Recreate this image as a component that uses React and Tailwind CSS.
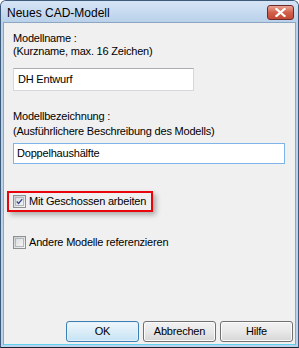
import React from "react";

function CheckBox({ checked }) {
  return (
    <span className="w-[13px] h-[13px] border border-[#8e8f8f] bg-gradient-to-br from-[#cbcfd5] to-[#f6f6f6] flex items-center justify-center shrink-0">
      <span className="w-[9px] h-[9px] border border-[#b3b8bf] bg-gradient-to-br from-[#dcdee2] to-[#f4f4f4] flex items-center justify-center">
        {checked && (
          <svg width="9" height="9" viewBox="0 0 9 9">
            <path d="M1 4.5 L3.3 7 L8 1.5" fill="none" stroke="#3b4e8c" strokeWidth="1.8" />
          </svg>
        )}
      </span>
    </span>
  );
}

function DlgButton({ children, primary }) {
  return (
    <button
      className={
        "w-[73px] h-[21px] rounded-[3px] border text-[11px] leading-none text-black " +
        (primary
          ? "border-[#3c7fb1] bg-gradient-to-b from-[#eef7fc] via-[#dbedf8] to-[#c6e3f4] shadow-[inset_0_0_0_1px_#e4f1fc]"
          : "border-[#707070] bg-gradient-to-b from-[#f2f2f2] via-[#e8e8e8] to-[#d6d6d6] shadow-[inset_0_0_0_1px_#fcfcfc]")
      }
    >
      {children}
    </button>
  );
}

export default function App() {
  return (
    <div className="w-[299px] h-[348px] flex flex-col bg-[#bcd2ea] border border-[#3d5a7a] border-b-[#1a2430] rounded-t-[6px] font-['Liberation_Sans',Arial,sans-serif] text-[11px] tracking-[-0.2px] text-black antialiased overflow-hidden">
      {/* title bar */}
      <div className="h-[21px] shrink-0 flex items-center justify-between pl-[6px] pr-[4px] bg-gradient-to-b from-[#d6e5f5] to-[#b9d1ea]">
        <span className="text-[12px] tracking-normal leading-none pt-[2px]">Neues CAD-Modell</span>
        <span className="w-[27px] h-[15px] mt-[1px] rounded-[3px] border border-[#6e2a2a] bg-gradient-to-b from-[#e8a494] via-[#d2604a] to-[#c34a35] flex items-center justify-center">
          <svg width="11" height="9" viewBox="0 0 11 9">
            <path d="M1.5 1 L9.5 8 M9.5 1 L1.5 8" stroke="#ffffff" strokeWidth="2.2" strokeLinecap="square" />
          </svg>
        </span>
      </div>

      {/* client area */}
      <div className="flex-1 mx-[2px] mb-[2px] bg-[#f0f0f0] border border-[#8da6c2] border-b-[#5fd3ef] flex flex-col pl-[9px] pr-[2px]">
        <div className="pt-[9px] leading-[13px]">
          <div>Modellname :</div>
          <div>(Kurzname, max. 16 Zeichen)</div>
        </div>
        <div className="mt-[10px] w-[181px] h-[23px] bg-white border border-[#d5d9de] border-t-[#abadb3] flex items-center px-[4px]">
          DH Entwurf
        </div>

        <div className="mt-[18px] leading-[15px]">
          <div>Modellbezeichnung :</div>
          <div>(Ausführlichere Beschreibung des Modells)</div>
        </div>
        <div className="mt-[4px] w-[272px] h-[21px] bg-white border border-[#7eb4ea] flex items-center px-[3px]">
          Doppelhaushälfte
        </div>

        <div className="mt-[27px] -ml-[6px] w-[146px] h-[21px] border-2 border-[#e8050b] shadow-[3px_3px_5px_rgba(0,0,0,0.28)] flex items-center gap-[3px] pl-[4px]">
          <CheckBox checked />
          <span>Mit Geschossen arbeiten</span>
        </div>

        <div className="mt-[22px] flex items-center gap-[3px]">
          <CheckBox />
          <span>Andere Modelle referenzieren</span>
        </div>

        <div className="mt-auto mb-[2px] flex justify-end gap-[4px]">
          <DlgButton primary>OK</DlgButton>
          <DlgButton>Abbrechen</DlgButton>
          <DlgButton>Hilfe</DlgButton>
        </div>
      </div>
    </div>
  );
}
